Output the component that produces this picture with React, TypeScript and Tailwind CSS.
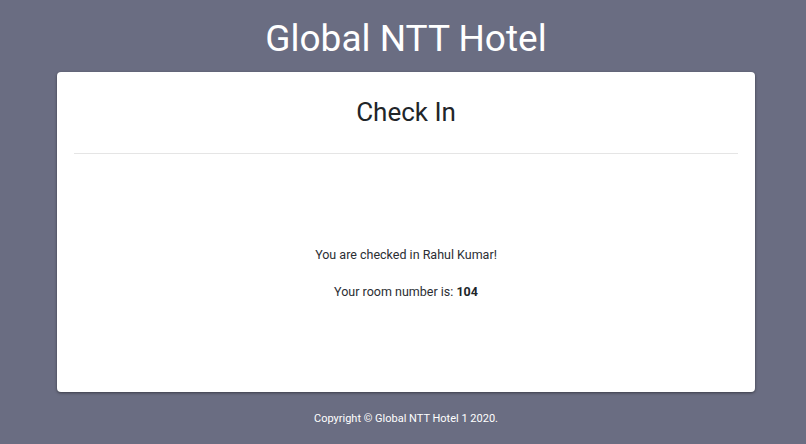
export default function App() {
  return (
    <div className="min-h-[444px] w-full bg-[#6a6d82] pl-[57px] pr-[51px] font-['Roboto',sans-serif] text-[#212529]">
      <h1 className="pt-[17px] text-center text-[37px] leading-[44px] text-white">Global NTT Hotel</h1>
      <div className="mt-[11px] h-[320px] rounded-[4px] bg-white px-[17px] shadow-[0_1px_3px_rgba(0,0,0,0.45)]">
        <h3 className="pt-[24px] pb-[25px] text-center text-[26px] leading-[32px]">Check In</h3>
        <div className="border-t border-[#e5e5e5]" />
        <div className="pt-[92px] text-center text-[12.5px] leading-[18px] text-[#2b2e33]">
          <p>You are checked in Rahul Kumar!</p>
          <p className="mt-[19px]">
            Your room number is: <b className="text-[#212529]">104</b>
          </p>
        </div>
      </div>
      <p className="pt-[19px] text-center text-[11px] leading-[16px] text-white">Copyright © Global NTT Hotel 1 2020.</p>
    </div>
  );
}
